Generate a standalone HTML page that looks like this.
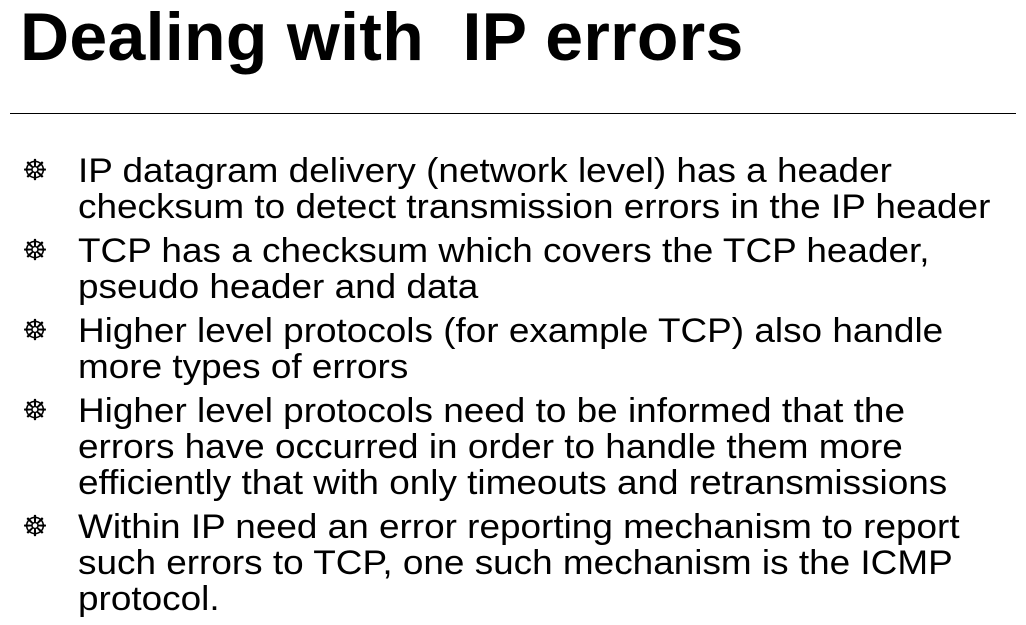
<!DOCTYPE html>
<html><head><meta charset="utf-8"><style>
body{margin:0;width:1026px;height:614px;background:#fff;overflow:hidden;font-family:"Liberation Sans",sans-serif;color:#000;position:relative}
h1{position:absolute;left:20px;top:-2px;margin:0;font-size:68px;font-weight:bold;white-space:pre;letter-spacing:0.3px}
.line{position:absolute;left:10px;top:113px;width:1006px;height:1px;background:#000}
ul{position:absolute;left:0;top:153px;margin:0;padding:0;list-style:none}
li{position:relative;padding-left:78px;font-size:34.5px;line-height:36px;margin-bottom:8px;white-space:nowrap}
li span{display:inline-block;transform:scaleX(1.07);transform-origin:left top}
li:before{content:"☸";font-family:"DejaVu Sans",sans-serif;position:absolute;left:22px;top:-1px;font-size:29px;font-weight:bold}
</style></head><body>
<h1>Dealing with  IP errors</h1>
<div class="line"></div>
<ul>
<li><span>IP datagram delivery (network level) has a header<br>checksum to detect transmission errors in the IP header</span></li>
<li><span>TCP has a checksum which covers the TCP header,<br>pseudo header and data</span></li>
<li><span>Higher level protocols (for example TCP) also handle<br>more types of errors</span></li>
<li><span>Higher level protocols need to be informed that the<br>errors have occurred in order to handle them more<br>efficiently that with only timeouts and retransmissions</span></li>
<li><span>Within IP need an error reporting mechanism to report<br>such errors to TCP, one such mechanism is the ICMP<br>protocol.</span></li>
</ul>
</body></html>
